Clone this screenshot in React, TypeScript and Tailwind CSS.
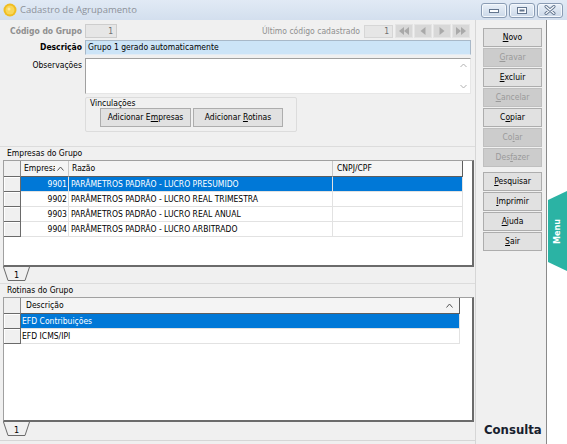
import React from "react";

function WinBtn({ kind }: { kind: "min" | "max" | "close" }) {
  return (
    <div className="w-[26px] h-[15px] rounded-[3px] border border-[#8a9cb4] bg-linear-to-b from-[#e9f0f8] to-[#cbd8e8] flex items-center justify-center shadow-[inset_0_0_0_1px_#f4f8fc]">
      {kind === "min" && (
        <svg width="12" height="8" viewBox="0 0 12 8">
          <rect x="1.5" y="3.5" width="9" height="3" fill="#fbfdff" stroke="#62758e" />
        </svg>
      )}
      {kind === "max" && (
        <svg width="12" height="9" viewBox="0 0 12 9">
          <rect x="1.5" y="1.5" width="9" height="6" fill="#fbfdff" stroke="#62758e" />
          <rect x="3.5" y="3.5" width="5" height="2" fill="#62758e" />
        </svg>
      )}
      {kind === "close" && (
        <svg width="12" height="10" viewBox="0 0 12 10">
          <path d="M2 1.5 L10 8.5 M10 1.5 L2 8.5" stroke="#62758e" strokeWidth="3" strokeLinecap="round" />
          <path d="M2 1.5 L10 8.5 M10 1.5 L2 8.5" stroke="#fbfdff" strokeWidth="1.2" strokeLinecap="round" />
        </svg>
      )}
    </div>
  );
}

function NavBtn({ dir }: { dir: "first" | "prev" | "next" | "last" }) {
  return (
    <div className="w-[18px] h-[14px] bg-[#d8d8d8] border border-[#e4e4e4] flex items-center justify-center">
      <svg width="12" height="10" viewBox="0 0 12 10">
        {dir === "first" && (
          <>
            <path d="M6 1 L1 5 L6 9 Z" fill="#a9a9a9" />
            <path d="M11 1 L6 5 L11 9 Z" fill="#a9a9a9" />
          </>
        )}
        {dir === "prev" && <path d="M8.5 1 L3.5 5 L8.5 9 Z" fill="#a9a9a9" />}
        {dir === "next" && <path d="M3.5 1 L8.5 5 L3.5 9 Z" fill="#a9a9a9" />}
        {dir === "last" && (
          <>
            <path d="M1 1 L6 5 L1 9 Z" fill="#a9a9a9" />
            <path d="M6 1 L11 5 L6 9 Z" fill="#a9a9a9" />
          </>
        )}
      </svg>
    </div>
  );
}

function Tab() {
  return (
    <div className="h-[14px] pl-[3px] shrink-0">
      <svg width="28" height="14" viewBox="0 0 28 14">
        <path d="M0.5 0 L5 13.5 L22 13.5 L26.5 0" fill="#f0f0f0" stroke="#6a6a6a" />
        <text x="13.5" y="10.5" textAnchor="middle" fontSize="9" fill="#000" fontFamily="DejaVu Sans Condensed, DejaVu Sans, sans-serif">1</text>
      </svg>
    </div>
  );
}

function IndCell({ header }: { header?: boolean }) {
  return (
    <div
      className={
        header
          ? "w-[17px] shrink-0 h-full bg-[#f0f0f0] border-r border-b border-r-[#8a8a8a] border-b-[#6a6a6a]"
          : "w-[17px] shrink-0 h-full bg-[#f0f0f0] border-r border-b border-[#6a6a6a] shadow-[inset_1px_1px_0_#ffffff]"
      }
    />
  );
}

const empresas = [
  ["9901", "PARÂMETROS PADRÃO - LUCRO PRESUMIDO"],
  ["9902", "PARÂMETROS PADRÃO - LUCRO REAL TRIMESTRA"],
  ["9903", "PARÂMETROS PADRÃO - LUCRO REAL ANUAL"],
  ["9904", "PARÂMETROS PADRÃO - LUCRO ARBITRADO"],
];

function EmpresasGrid() {
  return (
    <div className="ml-[3px] w-[471px] h-[107px] bg-white border-t border-l border-[#a0a0a0] border-r-2 border-b-2 border-r-[#6b6b6b] border-b-[#6b6b6b] overflow-hidden shrink-0">
      <div className="flex h-[16px]">
        <IndCell header />
        <div className="w-[48px] shrink-0 h-full bg-[#f4f4f4] border-r border-b border-r-[#c8c8c8] border-b-[#5e5e5e] flex items-center pl-[3px] gap-[2px]">
          <span className="w-[31px] whitespace-nowrap overflow-hidden">Empresa</span>
          <svg width="7" height="5" viewBox="0 0 7 5"><path d="M0.5 4.5 L3.5 1 L6.5 4.5" fill="none" stroke="#555" /></svg>
        </div>
        <div className="w-[264px] shrink-0 h-full bg-[#f4f4f4] border-r border-b border-r-[#c8c8c8] border-b-[#5e5e5e] flex items-center pl-[3px]">Razão</div>
        <div className="w-[130px] shrink-0 h-full bg-[#f4f4f4] border-r border-b border-r-[#5e5e5e] border-b-[#5e5e5e] flex items-center pl-[4px]">CNPJ/CPF</div>
      </div>
      {empresas.map(([c, r], i) => {
        const sel = i === 0;
        return (
          <div key={c} className="flex h-[15px]">
            <IndCell />
            <div className={(sel ? "bg-[#0078d7] text-white " : "") + "w-[48px] shrink-0 h-full border-r border-b border-[#e2e2e2] flex items-center justify-end pr-[1px]"}>{c}</div>
            <div className={(sel ? "bg-[#0078d7] text-white " : "") + "w-[264px] shrink-0 h-full border-r border-b border-[#e2e2e2] flex items-center pl-[2px] whitespace-nowrap"}>{r}</div>
            <div className={(sel ? "bg-[#0078d7] " : "") + "w-[130px] shrink-0 h-full border-r border-b border-[#e2e2e2]"} />
          </div>
        );
      })}
    </div>
  );
}

function RotinasGrid() {
  const rows = ["EFD Contribuições", "EFD ICMS/IPI"];
  return (
    <div className="ml-[3px] w-[471px] h-[125px] bg-white border-t border-l border-[#a0a0a0] border-r-2 border-b-2 border-r-[#6b6b6b] border-b-[#6b6b6b] overflow-hidden shrink-0">
      <div className="flex h-[16px]">
        <IndCell header />
        <div className="w-[439px] shrink-0 h-full bg-[#f4f4f4] border-r border-b border-[#5e5e5e] flex items-center pl-[5px]">
          <span>Descrição</span>
          <svg className="ml-auto mr-[6px]" width="7" height="5" viewBox="0 0 7 5"><path d="M0.5 4.5 L3.5 1 L6.5 4.5" fill="none" stroke="#555" /></svg>
        </div>
      </div>
      {rows.map((r, i) => {
        const sel = i === 0;
        return (
          <div key={r} className="flex h-[15px]">
            <IndCell />
            <div className={(sel ? "bg-[#0078d7] text-white " : "") + "w-[439px] shrink-0 h-full border-r border-b border-[#e2e2e2] flex items-center pl-[1px] whitespace-nowrap"}>{r}</div>
          </div>
        );
      })}
    </div>
  );
}

function SideBtn({ label, u, disabled, mt }: { label: string; u: number; disabled?: boolean; mt?: string }) {
  return (
    <div
      className={
        (disabled
          ? "bg-[#cccccc] border-[#bfbfbf] text-[#9a9a9a] "
          : "bg-[#e1e1e1] border-[#adadad] text-black ") +
        "w-[59px] h-[19px] border flex items-center justify-center shrink-0 " +
        (mt || "mt-[1px]")
      }
    >
      <span>
        {label.slice(0, u)}
        <span className="underline underline-offset-[1px]">{label[u]}</span>
        {label.slice(u + 1)}
      </span>
    </div>
  );
}

export default function App() {
  return (
    <div className="w-[567px] h-[444px] overflow-hidden bg-[#f0f0f0] text-[8.5px] leading-none text-black font-['DejaVu_Sans_Condensed','DejaVu_Sans',sans-serif]">
      {/* Title bar */}
      <div className="h-[20px] flex items-center bg-linear-to-b from-[#e1eaf5] to-[#d3dfee]">
        <svg className="ml-[3px]" width="14" height="14" viewBox="0 0 14 14">
          <circle cx="7" cy="7" r="6.5" fill="#f0bd22" />
          <circle cx="7" cy="7" r="4.5" fill="#f8d75a" />
          <circle cx="6" cy="6" r="1.5" fill="#fbe9a0" />
        </svg>
        <span className="ml-[3px] text-[9.5px] text-[#8d9199] font-['Open_Sans',sans-serif]">Cadastro de Agrupamento</span>
        <div className="ml-auto mr-[4px] flex gap-[2px]">
          <WinBtn kind="min" />
          <WinBtn kind="max" />
          <WinBtn kind="close" />
        </div>
      </div>

      <div className="flex h-[424px]">
        {/* Left panel */}
        <div className="w-[476px] shrink-0 h-full border-r border-[#d6d6d6] flex flex-col">
          {/* Row 1 */}
          <div className="flex items-center h-[14px] mt-[4px] shrink-0">
            <div className="w-[82px] text-right font-bold text-[#8f8f8f] whitespace-nowrap">Código do Grupo</div>
            <div className="ml-[3px] w-[32px] h-[14px] bg-[#e6e6e6] border border-[#cdcdcd] flex items-center justify-end pr-[3px] text-[#707070]">1</div>
            <div className="ml-auto text-[#8f8f8f] whitespace-nowrap">Último código cadastrado</div>
            <div className="ml-[4px] w-[29px] h-[13px] bg-[#e6e6e6] border border-[#d6d6d6] flex items-center justify-end pr-[3px] text-[#707070]">1</div>
            <div className="ml-[2px] flex gap-[1px]">
              <NavBtn dir="first" />
              <NavBtn dir="prev" />
              <NavBtn dir="next" />
              <NavBtn dir="last" />
            </div>
            <div className="w-[5px]" />
          </div>
          {/* Row 2 */}
          <div className="flex items-center h-[15px] mt-[2px] shrink-0">
            <div className="w-[82px] text-right font-bold">Descrição</div>
            <div className="ml-[3px] w-[386px] h-[15px] bg-[#cce4f7] border border-[#a8b8c8] border-b-[#e3ecf5] flex items-center pl-[2px]">Grupo 1 gerado automaticamente</div>
          </div>
          {/* Row 3 */}
          <div className="flex items-start h-[36px] mt-[3px] shrink-0">
            <div className="w-[82px] text-right pt-[3px]">Observações</div>
            <div className="ml-[3px] w-[386px] h-[36px] bg-white border border-[#a0a0a0] border-b-[#e6e6e6] border-r-[#e6e6e6] flex justify-end">
              <div className="w-[14px] h-full flex flex-col items-center justify-between py-[4px]">
                <svg width="7" height="5" viewBox="0 0 7 5"><path d="M0.5 4 L3.5 1 L6.5 4" fill="none" stroke="#b0b0b0" /></svg>
                <svg width="7" height="5" viewBox="0 0 7 5"><path d="M0.5 1 L3.5 4 L6.5 1" fill="none" stroke="#b0b0b0" /></svg>
              </div>
            </div>
          </div>
          {/* Vinculações */}
          <div className="ml-[85px] mt-[3px] w-[212px] h-[35px] border border-[#dcdcdc] rounded-[2px] shrink-0">
            <div className="pl-[4px] pt-[1px] h-[9px]">Vinculações</div>
            <div className="flex gap-[2px] pl-[14px] mt-[1px]">
              <div className="w-[91px] h-[19px] bg-[#e1e1e1] border border-[#adadad] flex items-center justify-center">
                <span>Adicionar E<span className="underline underline-offset-[1px]">m</span>presas</span>
              </div>
              <div className="w-[90px] h-[19px] bg-[#e1e1e1] border border-[#adadad] flex items-center justify-center">
                <span>Adicionar <span className="underline underline-offset-[1px]">R</span>otinas</span>
              </div>
            </div>
          </div>
          {/* Empresas do Grupo */}
          <div className="mt-[14px] border-t border-[#dcdcdc] shrink-0">
            <div className="h-[13px] pl-[7px] flex items-center">Empresas do Grupo</div>
          </div>
          <EmpresasGrid />
          <Tab />
          {/* Rotinas do Grupo */}
          <div className="mt-[2px] border-t border-[#dcdcdc] shrink-0">
            <div className="h-[13px] pl-[7px] flex items-center">Rotinas do Grupo</div>
          </div>
          <RotinasGrid />
          <Tab />
          <div className="mt-auto mb-[3px] border-b border-[#d6d6d6]" />
        </div>

        {/* Button column */}
        <div className="w-[71px] shrink-0 h-full flex flex-col pl-[7px] pt-[8px] border-r border-[#8a8a8a]">
          <SideBtn label="Novo" u={0} mt="mt-0" />
          <SideBtn label="Gravar" u={0} disabled />
          <SideBtn label="Excluir" u={0} />
          <SideBtn label="Cancelar" u={0} disabled />
          <SideBtn label="Copiar" u={1} />
          <SideBtn label="Colar" u={2} disabled />
          <SideBtn label="Desfazer" u={3} disabled />
          <SideBtn label="Pesquisar" u={0} mt="mt-[5px]" />
          <SideBtn label="Imprimir" u={0} />
          <SideBtn label="Ajuda" u={0} />
          <SideBtn label="Sair" u={0} />
          <div className="mt-auto mb-[8px] text-[13px] font-bold text-[#17202e] pl-[1px]">Consulta</div>
        </div>

        {/* Menu strip */}
        <div className="flex-1 h-full bg-white relative">
          <svg className="absolute right-0 top-[171px]" width="19" height="80" viewBox="0 0 19 80">
            <polygon points="0,9 19,0 19,80 0,71" fill="#2bb3a4" />
          </svg>
          <div className="absolute right-0 top-[171px] w-[19px] h-[80px] flex items-center justify-center">
            <span className="-rotate-90 text-white font-bold text-[9px] whitespace-nowrap">Menu</span>
          </div>
        </div>
      </div>
    </div>
  );
}
